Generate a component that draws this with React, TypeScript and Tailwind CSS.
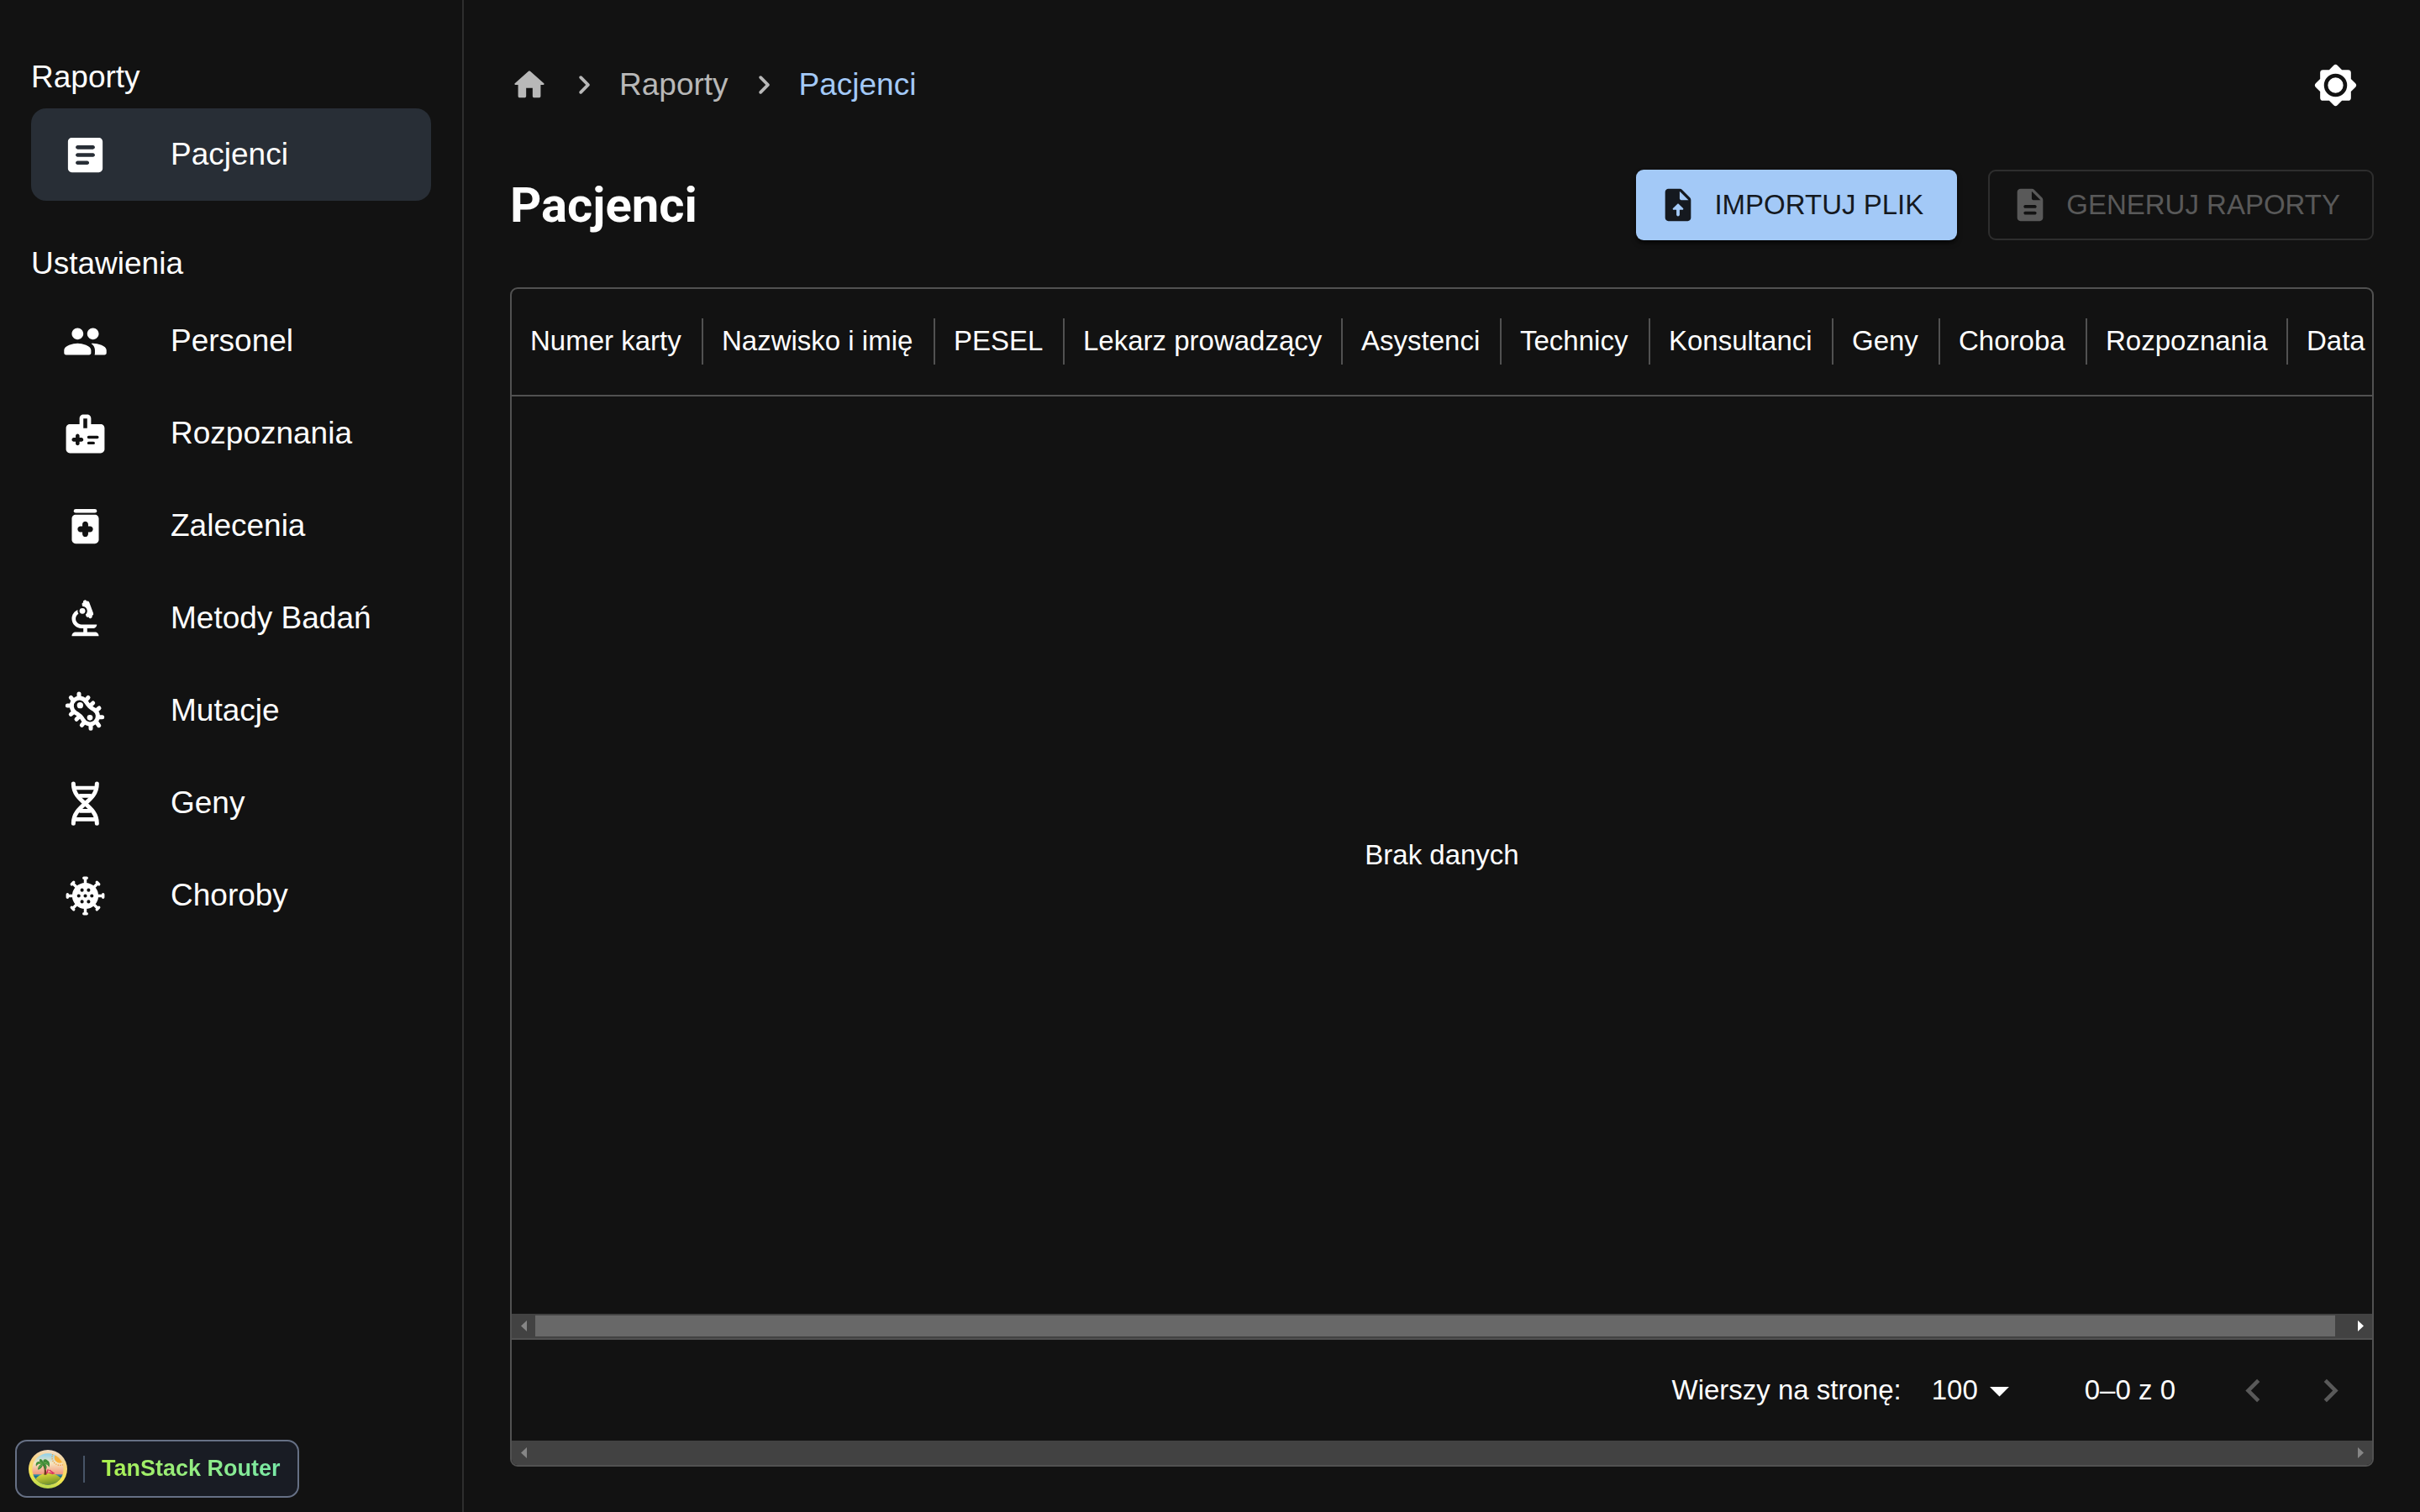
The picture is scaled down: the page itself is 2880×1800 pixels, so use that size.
import type { ReactNode } from "react";

type IconProps = { className?: string };

function Svg({ className = "size-[55px]", viewBox = "0 0 24 24", children }: IconProps & { viewBox?: string; children: ReactNode }) {
  return (
    <svg viewBox={viewBox} className={`shrink-0 ${className}`} fill="currentColor" aria-hidden="true">
      {children}
    </svg>
  );
}

const ArticleIcon = () => (
  <Svg>
    <path d="M19 3H5c-1.1 0-2 .9-2 2v14c0 1.1.9 2 2 2h14c1.1 0 2-.9 2-2V5c0-1.1-.9-2-2-2m-6 14H8c-.55 0-1-.45-1-1s.45-1 1-1h5c.55 0 1 .45 1 1s-.45 1-1 1m3-4H8c-.55 0-1-.45-1-1s.45-1 1-1h8c.55 0 1 .45 1 1s-.45 1-1 1m0-4H8c-.55 0-1-.45-1-1s.45-1 1-1h8c.55 0 1 .45 1 1s-.45 1-1 1" />
  </Svg>
);

const PeopleIcon = () => (
  <Svg>
    <path d="M16 11c1.66 0 2.99-1.34 2.99-3S17.66 5 16 5s-3 1.34-3 3 1.34 3 3 3m-8 0c1.66 0 2.99-1.34 2.99-3S9.66 5 8 5 5 6.34 5 8s1.34 3 3 3m0 2c-2.33 0-7 1.17-7 3.5V18c0 .55.45 1 1 1h12c.55 0 1-.45 1-1v-1.5c0-2.33-4.67-3.5-7-3.5m8 0c-.29 0-.62.02-.97.05.02.01.03.03.04.04 1.14.83 1.93 1.94 1.93 3.41V18c0 .35-.07.69-.18 1H22c.55 0 1-.45 1-1v-1.5c0-2.33-4.67-3.5-7-3.5" />
  </Svg>
);

const DiagnosisIcon = () => (
  <Svg>
    <path
      fillRule="evenodd"
      d="M20 7h-5V4c0-1.1-.9-2-2-2h-2c-1.1 0-2 .9-2 2v3H4c-1.1 0-2 .9-2 2v11c0 1.1.9 2 2 2h16c1.1 0 2-.9 2-2V9c0-1.1-.9-2-2-2m-9-3h2v5h-2zM8 12c.55 0 1 .45 1 1v1h1c.55 0 1 .45 1 1s-.45 1-1 1H9v1c0 .55-.45 1-1 1s-1-.45-1-1v-1H6c-.55 0-1-.45-1-1s.45-1 1-1h1v-1c0-.55.45-1 1-1m5.750 1h4.500a.75.750 0 0 1 0 1.500h-4.500a.75.750 0 0 1 0-1.500m0 3h2.500a.75.750 0 0 1 0 1.500h-2.500a.75.750 0 0 1 0-1.500"
    />
  </Svg>
);

const MedicationIcon = () => (
  <Svg>
    <rect x="6" y="3" width="12" height="2" rx="1" />
    <path
      fillRule="evenodd"
      d="M17 6H7c-1.1 0-2 .9-2 2v11c0 1.1.9 2 2 2h10c1.1 0 2-.9 2-2V8c0-1.1-.9-2-2-2m-2.500 9h-1v1c0 .83-.67 1.500-1.500 1.500s-1.500-.67-1.500-1.500v-1h-1C8.670 15 8 14.330 8 13.500S8.670 12 9.500 12h1v-1c0-.83.67-1.500 1.500-1.500s1.500.67 1.500 1.500v1h1c.83 0 1.500.67 1.500 1.500s-.67 1.500-1.500 1.500"
    />
  </Svg>
);

const MicroscopeIcon = () => (
  <Svg>
    <path d="M7 19c-1.1 0-2 .9-2 2h14c0-1.1-.9-2-2-2h-4v-2h3c1.1 0 2-.9 2-2h-8c-1.66 0-3-1.34-3-3 0-1.09.59-2.04 1.46-2.56C8.17 9.03 8 8.54 8 8c0-.21.04-.42.09-.62C6.28 8.13 5 9.92 5 12c0 2.76 2.24 5 5 5h1v2z" />
    <path d="M10.56 5.51C11.91 5.54 13 6.64 13 8c0 .75-.33 1.41-.85 1.87L12.4 10.55Q12.74 11.49 13.68 11.15Q14.02 12.09 14.96 11.75Q15.9 11.41 15.56 10.47Q16.5 10.13 16.16 9.19L14.1 3.55Q13.76 2.61 12.82 2.95Q12.48 2.01 11.54 2.35Q10.6 2.69 10.94 3.63Q10 3.97 10.34 4.91Z" />
    <circle cx="10.5" cy="8" r="1.5" />
  </Svg>
);

const BacteriaIcon = () => (
  <Svg viewBox="42 26 165 165">
    <g fill="none" stroke="currentColor" strokeWidth="15" strokeLinecap="round" strokeLinejoin="round">
      <path d="M129 78A28 28 0 1 0 89 114C100 120 109 125 116 139A28 28 0 1 0 156 103C145 98 137 92 129 78Z" />
      <path d="M102 47v14M135 60l-10 12M152 80l-12 11M174 98l-12 10M185 130h-14M173 160l-8-11M144 171v-14M112 159l9-11M93 138l11-11M73 120l11-9M61 89h14M73 60l9 11" />
    </g>
    <circle cx="106" cy="88" r="11" />
    <circle cx="141" cy="132" r="10" />
  </Svg>
);

const DnaIcon = () => (
  <Svg viewBox="42 356 165 165">
    <g fill="none" stroke="currentColor" strokeWidth="15" strokeLinecap="round">
      <path d="M82 368C82 437 166 441 166 510M166 368C166 437 82 441 82 510" />
      <path strokeWidth="14" d="M90 383h68M106 411h36M106 465h36M90 495h68" />
    </g>
  </Svg>
);

const VirusIcon = () => (
  <Svg>
    <path
      fillRule="evenodd"
      d="M12 5.2a6.8 6.8 0 1 0 0 13.6 6.8 6.8 0 0 0 0-13.6M10.3 8.1a.9.9 0 1 1 0 1.8.9.9 0 0 1 0-1.8m3.4 0a.9.9 0 1 1 0 1.8.9.9 0 0 1 0-1.8M8.6 11.1a.9.9 0 1 1 0 1.8.9.9 0 0 1 0-1.8m3.4 0a.9.9 0 1 1 0 1.8.9.9 0 0 1 0-1.8m3.4 0a.9.9 0 1 1 0 1.8.9.9 0 0 1 0-1.8m-5.1 3a.9.9 0 1 1 0 1.8.9.9 0 0 1 0-1.8m3.4 0a.9.9 0 1 1 0 1.8.9.9 0 0 1 0-1.8"
    />
    <g fill="none" stroke="currentColor" strokeWidth="1.5" strokeLinecap="round">
      {[0, 45, 90, 135, 180, 225, 270, 315].map((angle) => (
        <path key={angle} transform={`rotate(${angle} 12 12)`} d="M12 6V2.75M11.25 2.75h1.5" />
      ))}
    </g>
  </Svg>
);

const HomeIcon = () => (
  <Svg className="size-[46px]">
    <path d="M10 19v-5h4v5c0 .55.45 1 1 1h3c.55 0 1-.45 1-1v-7h1.7c.46 0 .68-.57.33-.87L12.67 3.6c-.38-.34-.96-.34-1.34 0l-8.36 7.53c-.34.3-.13.87.33.87H5v7c0 .55.45 1 1 1h3c.55 0 1-.45 1-1" />
  </Svg>
);

const NextIcon = ({ className }: IconProps) => (
  <Svg className={className}>
    <path d="M9.29 15.88 13.17 12 9.29 8.12a.996.996 0 1 1 1.41-1.41l4.59 4.59c.39.39.39 1.02 0 1.41L10.7 17.3c-.39.39-1.02.39-1.41 0-.38-.39-.39-1.03 0-1.42" />
  </Svg>
);

const BrightnessIcon = () => (
  <Svg>
    <path
      d="M18.5 9.31V5.5H14.69L12 2.81 9.31 5.5H5.5V9.31L2.81 12 5.5 14.69V18.5H9.31L12 21.19 14.69 18.5H18.5V14.69L21.19 12Z"
      stroke="currentColor"
      strokeWidth="3"
      strokeLinejoin="round"
    />
    <circle cx="12" cy="12" r="5" fill="none" stroke="#121212" strokeWidth="2" />
  </Svg>
);

const UploadFileIcon = () => (
  <Svg className="size-[46px]">
    <path
      fillRule="evenodd"
      d="M14.59 2.59c-.38-.38-.89-.59-1.42-.59H6c-1.1 0-2 .9-2 2v16c0 1.1.89 2 1.99 2H18c1.1 0 2-.9 2-2V8.83c0-.53-.21-1.04-.59-1.41zM13 8V3.5L18.5 9H14c-.55 0-1-.45-1-1m1.8 7H13v3c0 .55-.45 1-1 1s-1-.45-1-1v-3H9.21c-.45 0-.67-.54-.35-.85l2.8-2.79c.2-.19.51-.19.71 0l2.79 2.79c.3.31.08.85-.36.85"
    />
  </Svg>
);

const DescriptionIcon = () => (
  <Svg className="size-[46px]">
    <path d="M14.59 2.59c-.38-.38-.89-.59-1.42-.59H6c-1.1 0-2 .9-2 2v16c0 1.1.89 2 1.99 2H18c1.1 0 2-.9 2-2V8.83c0-.53-.21-1.04-.59-1.41zM15 18H9c-.55 0-1-.45-1-1s.45-1 1-1h6c.55 0 1 .45 1 1s-.45 1-1 1m0-4H9c-.55 0-1-.45-1-1s.45-1 1-1h6c.55 0 1 .45 1 1s-.45 1-1 1m-2-6V3.5L18.5 9H14c-.55 0-1-.45-1-1" />
  </Svg>
);

function IslandLogo() {
  return (
    <svg viewBox="42 39 138 138" className="size-[46px] shrink-0" aria-hidden="true">
      <defs>
        <linearGradient id="ring" x1="0.6" y1="0" x2="0.4" y2="1">
          <stop offset="0" stopColor="#f0dcc8" />
          <stop offset="0.35" stopColor="#fad27c" />
          <stop offset="0.7" stopColor="#f5e650" />
          <stop offset="1" stopColor="#b4d84c" />
        </linearGradient>
        <linearGradient id="sky" x1="0" y1="0" x2="0" y2="1">
          <stop offset="0" stopColor="#86d0f0" />
          <stop offset="0.3" stopColor="#f6e6c0" />
          <stop offset="0.65" stopColor="#f0937a" />
        </linearGradient>
        <linearGradient id="sand" x1="0.3" y1="0" x2="0.6" y2="1">
          <stop offset="0" stopColor="#e2dc3c" />
          <stop offset="0.5" stopColor="#8fa62c" />
          <stop offset="1" stopColor="#2f6a2c" />
        </linearGradient>
        <clipPath id="disc">
          <circle cx="111" cy="108" r="56" />
        </clipPath>
      </defs>
      <circle cx="111" cy="108" r="69" fill="url(#ring)" />
      <g clipPath="url(#disc)">
        <rect x="50" y="50" width="122" height="120" fill="url(#sky)" />
        <circle cx="154" cy="66" r="20" fill="#f8b03c" />
        <circle cx="154" cy="66" r="28" fill="none" stroke="#f19a3e" strokeWidth="4" strokeDasharray="4 4" />
        <rect x="50" y="127" width="122" height="42" fill="#2c8aa6" />
        <path d="M50 135h122M50 144h122" stroke="#14506e" strokeWidth="3" />
        <ellipse cx="113" cy="153" rx="47" ry="31" fill="url(#sand)" />
      </g>
      <path d="M92 92c7 12 8 22 5 36h9c0-15-3-27-10-38z" fill="#6d3b1e" />
      <path d="M106 125l6-16M108 118l22 7M116 111l18 13" stroke="#d8295e" strokeWidth="4" fill="none" />
      <path
        d="M94 84C92 74 100 68 110 77C116 79 120 90 115 101C112 94 107 91 102 91C109 97 108 107 101 112C100 103 98 97 93 93C91 102 84 108 75 110C75 101 79 95 86 90C79 88 73 91 69 98C66 86 73 79 83 82C79 77 80 72 86 72C91 74 93 79 94 84Z"
        fill="#3f8a3a"
      />
      <path d="M75 88q10-5 16 0M97 86q10-4 15 6M91 92q-8 4-12 12" stroke="#6cb04a" strokeWidth="3" fill="none" />
    </svg>
  );
}

type Item = { label: string; icon: () => ReactNode; active?: boolean };

const sections: { title: string; items: Item[] }[] = [
  { title: "Raporty", items: [{ label: "Pacjenci", icon: ArticleIcon, active: true }] },
  {
    title: "Ustawienia",
    items: [
      { label: "Personel", icon: PeopleIcon },
      { label: "Rozpoznania", icon: DiagnosisIcon },
      { label: "Zalecenia", icon: MedicationIcon },
      { label: "Metody Badań", icon: MicroscopeIcon },
      { label: "Mutacje", icon: BacteriaIcon },
      { label: "Geny", icon: DnaIcon },
      { label: "Choroby", icon: VirusIcon },
    ],
  },
];

const columns = [
  { label: "Numer karty", width: "w-[228px]" },
  { label: "Nazwisko i imię", width: "w-[276px]" },
  { label: "PESEL", width: "w-[154px]" },
  { label: "Lekarz prowadzący", width: "w-[331px]" },
  { label: "Asystenci", width: "w-[189px]" },
  { label: "Technicy", width: "w-[177px]" },
  { label: "Konsultanci", width: "w-[218px]" },
  { label: "Geny", width: "w-[127px]" },
  { label: "Choroba", width: "w-[175px]" },
  { label: "Rozpoznania", width: "w-[239px]" },
  { label: "Data", width: "w-[160px]" },
];

function Sidebar() {
  return (
    <aside className="flex w-[552px] shrink-0 flex-col gap-[38px] border-r-2 border-[#2e2e2e] px-[37px] pt-[55px]">
      {sections.map((section) => (
        <nav key={section.title} aria-label={section.title}>
          <h2 className="flex h-[74px] items-center text-[37px]">{section.title}</h2>
          <ul>
            {section.items.map(({ label, icon: Icon, active }) => (
              <li key={label}>
                <a
                  href="#"
                  aria-current={active ? "page" : undefined}
                  className={`flex h-[110px] items-center gap-[74px] rounded-[18px] px-[37px] text-[37px] ${active ? "bg-[#282e36]" : ""}`}
                >
                  <Icon />
                  {label}
                </a>
              </li>
            ))}
          </ul>
        </nav>
      ))}
    </aside>
  );
}

function Arrow({ direction, className }: { direction: "left" | "right"; className: string }) {
  return (
    <button type="button" aria-label={direction === "left" ? "Przewiń w lewo" : "Przewiń w prawo"} className={`flex h-full w-7 items-center justify-center ${className}`}>
      <svg viewBox="0 0 7 13" className="h-[13px] w-[7px]" fill="currentColor" aria-hidden="true">
        <path d={direction === "left" ? "M7 0v13L0 6.5z" : "M0 0v13l7-6.5z"} />
      </svg>
    </button>
  );
}

function ScrollBar({ thumb }: { thumb?: boolean }) {
  return (
    <div className="flex h-[29px] items-center justify-between bg-[#424242]">
      <Arrow direction="left" className="text-[#868686]" />
      {thumb && <div className="mr-4 h-[25px] flex-1 bg-[#686868]" />}
      <Arrow direction="right" className={thumb ? "text-white" : "text-[#868686]"} />
    </div>
  );
}

function PatientsGrid() {
  return (
    <section className="flex min-w-0 flex-1 flex-col overflow-hidden rounded-[9px] border-2 border-[#515151] text-[33px]">
      <div className="overflow-hidden border-b-2 border-[#515151]">
        <table className="w-0 table-fixed">
          <thead>
            <tr>
              {columns.map(({ label, width }, index) => (
                <th key={label} scope="col" className={`h-[126px] p-0 pb-[2px] text-left font-normal whitespace-nowrap ${width}`}>
                  <div className="flex items-center justify-between pl-[22px]">
                    {label}
                    {index < columns.length - 1 && <span className="h-[55px] w-[2px] bg-[#515151]" />}
                  </div>
                </th>
              ))}
            </tr>
          </thead>
        </table>
      </div>
      <div className="flex flex-1 items-center justify-center">Brak danych</div>
      <ScrollBar thumb />
      <div className="flex h-[122px] items-center justify-end border-t-2 border-[#515151] pr-1">
        <label htmlFor="rows" className="mr-[36px]">
          Wierszy na stronę:
        </label>
        <div className="relative mr-[74px] flex items-center">
          <select id="rows" defaultValue="100" className="w-[108px] appearance-none bg-transparent">
            <option>100</option>
          </select>
          <Svg className="pointer-events-none absolute right-0 size-[55px]">
            <path d="M7 10l5 5 5-5z" />
          </Svg>
        </div>
        <span className="mr-[46px]">0–0 z 0</span>
        <button type="button" disabled aria-label="Poprzednia strona" className="flex size-[92px] items-center justify-center text-[#595959]">
          <Svg>
            <path d="M15.41 16.59 10.83 12l4.58-4.59L14 6l-6 6 6 6z" />
          </Svg>
        </button>
        <button type="button" disabled aria-label="Następna strona" className="flex size-[92px] items-center justify-center text-[#595959]">
          <Svg>
            <path d="M8.59 16.59 13.17 12 8.59 7.41 10 6l6 6-6 6z" />
          </Svg>
        </button>
      </div>
      <ScrollBar />
    </section>
  );
}

export default function App() {
  return (
    <div className="flex min-h-screen bg-[#121212] font-['Liberation_Sans',Arial,sans-serif] text-white">
      <Sidebar />
      <main className="flex min-w-0 flex-1 flex-col px-[55px] pt-[55px] pb-[54px]">
        <header className="flex h-[92px] items-center justify-between">
          <nav aria-label="Okruszki" className="flex items-center gap-[19px] text-[37px] text-[#b8b8b8]">
            <a href="#" aria-label="Strona główna">
              <HomeIcon />
            </a>
            <NextIcon className="size-[46px]" />
            <a href="#">Raporty</a>
            <NextIcon className="size-[46px]" />
            <a href="#" aria-current="page" className="text-[#a3c9f7]">
              Pacjenci
            </a>
          </nav>
          <button type="button" aria-label="Zmień motyw" className="flex size-[92px] items-center justify-center">
            <BrightnessIcon />
          </button>
        </header>
        <div className="mt-[55px] mb-14 flex items-center justify-between">
          <h1 className="font-[Roboto,sans-serif] text-[58px] leading-[84px] font-bold">Pacjenci</h1>
          <div className="flex gap-[37px] text-[33px]">
            <button type="button" className="flex h-[84px] items-center gap-5 rounded-[9px] bg-[#a3c9f7] pr-[40px] pl-[27px] text-[#15191f] shadow-md shadow-black/60">
              <UploadFileIcon />
              IMPORTUJ PLIK
            </button>
            <button type="button" disabled className="flex h-[84px] items-center gap-5 rounded-[9px] border-2 border-[#2e2e2e] pr-[38px] pl-[25px] text-[#595959]">
              <DescriptionIcon />
              GENERUJ RAPORTY
            </button>
          </div>
        </div>
        <PatientsGrid />
      </main>
      <button type="button" className="fixed bottom-[17px] left-[18px] flex h-[69px] items-center rounded-[14px] border-2 border-[#667085] bg-[#191c24] pr-[20px] pl-[14px] text-[27px] font-bold">
        <IslandLogo />
        <span className="mr-[20px] ml-[19px] h-8 w-[2px] bg-[#475467]" />
        <span className="bg-linear-to-r from-[#acf04b] to-[#78e8a6] bg-clip-text text-transparent">TanStack Router</span>
      </button>
    </div>
  );
}
